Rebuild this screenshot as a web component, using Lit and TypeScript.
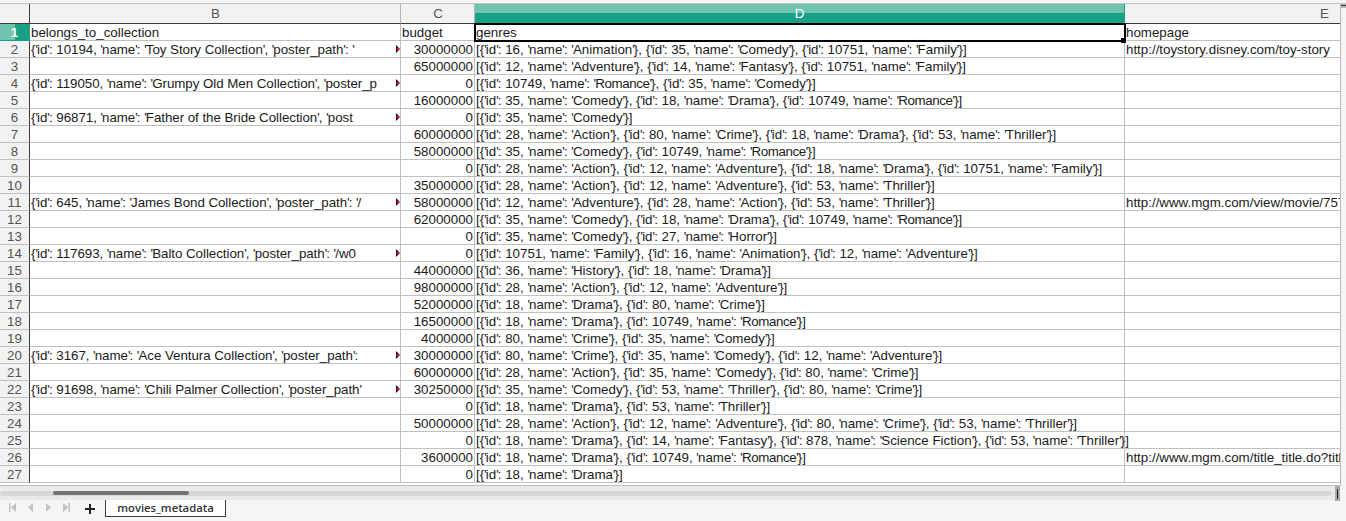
import { LitElement, html, css } from 'lit';
import { customElement } from 'lit/decorators.js';

type Row = { b?: string; c?: string; d: string; e?: string };

const g = (...items: [number, string][]) =>
  '[' + items.map(([id, name]) => `{'id': ${id}, 'name': '${name}'}`).join(', ') + ']';

// the reference sets apostrophes about 1px tighter than the browser does,
// and "Romance" comes out a little narrower too
const tight = (text?: string) => {
  if (!text) return '';
  return text.split("'").map((part, i) => {
    const body = part === 'Romance' ? html`<span class="rom">${part}</span>` : part;
    return i === 0 ? body : html`<span class="q">'</span>${body}`;
  });
};

const rows: Row[] = [
  { b: "{'id': 10194, 'name': 'Toy Story Collection', 'poster_path': '", c: '30000000', d: g([16, 'Animation'], [35, 'Comedy'], [10751, 'Family']), e: 'http://toystory.disney.com/toy-story' },
  { c: '65000000', d: g([12, 'Adventure'], [14, 'Fantasy'], [10751, 'Family']) },
  { b: "{'id': 119050, 'name': 'Grumpy Old Men Collection', 'poster_p", c: '0', d: g([10749, 'Romance'], [35, 'Comedy']) },
  { c: '16000000', d: g([35, 'Comedy'], [18, 'Drama'], [10749, 'Romance']) },
  { b: "{'id': 96871, 'name': 'Father of the Bride Collection', 'post", c: '0', d: g([35, 'Comedy']) },
  { c: '60000000', d: g([28, 'Action'], [80, 'Crime'], [18, 'Drama'], [53, 'Thriller']) },
  { c: '58000000', d: g([35, 'Comedy'], [10749, 'Romance']) },
  { c: '0', d: g([28, 'Action'], [12, 'Adventure'], [18, 'Drama'], [10751, 'Family']) },
  { c: '35000000', d: g([28, 'Action'], [12, 'Adventure'], [53, 'Thriller']) },
  { b: "{'id': 645, 'name': 'James Bond Collection', 'poster_path': '/", c: '58000000', d: g([12, 'Adventure'], [28, 'Action'], [53, 'Thriller']), e: 'http://www.mgm.com/view/movie/757' },
  { c: '62000000', d: g([35, 'Comedy'], [18, 'Drama'], [10749, 'Romance']) },
  { c: '0', d: g([35, 'Comedy'], [27, 'Horror']) },
  { b: "{'id': 117693, 'name': 'Balto Collection', 'poster_path': '/w0", c: '0', d: g([10751, 'Family'], [16, 'Animation'], [12, 'Adventure']) },
  { c: '44000000', d: g([36, 'History'], [18, 'Drama']) },
  { c: '98000000', d: g([28, 'Action'], [12, 'Adventure']) },
  { c: '52000000', d: g([18, 'Drama'], [80, 'Crime']) },
  { c: '16500000', d: g([18, 'Drama'], [10749, 'Romance']) },
  { c: '4000000', d: g([80, 'Crime'], [35, 'Comedy']) },
  { b: "{'id': 3167, 'name': 'Ace Ventura Collection', 'poster_path':", c: '30000000', d: g([80, 'Crime'], [35, 'Comedy'], [12, 'Adventure']) },
  { c: '60000000', d: g([28, 'Action'], [35, 'Comedy'], [80, 'Crime']) },
  { b: "{'id': 91698, 'name': 'Chili Palmer Collection', 'poster_path'", c: '30250000', d: g([35, 'Comedy'], [53, 'Thriller'], [80, 'Crime']) },
  { c: '0', d: g([18, 'Drama'], [53, 'Thriller']) },
  { c: '50000000', d: g([28, 'Action'], [12, 'Adventure'], [80, 'Crime'], [53, 'Thriller']) },
  { c: '0', d: g([18, 'Drama'], [14, 'Fantasy'], [878, 'Science Fiction'], [53, 'Thriller']) },
  { c: '3600000', d: g([18, 'Drama'], [10749, 'Romance']), e: 'http://www.mgm.com/title_title.do?title' },
  { c: '0', d: g([18, 'Drama']) },
];

@customElement('app-root')
export class AppRoot extends LitElement {
  static styles = css`
    :host {
      display: flex;
      flex-direction: column;
      width: 1346px;
      height: 521px;
      overflow: hidden;
      background: #f5f5f7;
      font-family: 'Liberation Sans', Arial, sans-serif;
      font-kerning: normal;
      color: #1a1a1a;
    }

    .top {
      height: 3px;
      background: #f5f5f7;
      border-bottom: 1px solid #c4c4c4;
      flex: none;
    }

    .main {
      display: flex;
      flex: none;
      height: 482px;
    }

    .sheet {
      width: 1340px;
      flex: none;
      overflow: hidden;
      background: #fff;
    }

    .side {
      flex: 1;
      position: relative;
      background: #f5f5f7;
      border-left: 1px solid #b8b8b8;
    }

    .side::before {
      content: '';
      position: absolute;
      left: 0;
      top: 0;
      width: 5px;
      height: 4px;
      background: linear-gradient(#b9b9b9 0 1px, #333 1px 2px, #b9b9b9 2px);
    }

    .grid {
      display: grid;
      grid-template-columns: 30px 371px 74px 650px 215px;
      grid-template-rows: 20px;
      grid-auto-rows: 17px;
      font-size: 13.33px;
      line-height: 17px;
    }

    .q {
      letter-spacing: -0.95px;
    }

    .rom {
      letter-spacing: -0.4px;
    }

    .head {
      box-sizing: border-box;
      background: #f2f2f2;
      border-bottom: 1px solid #3c3c3c;
      border-right: 1px solid #b4b4b4;
      color: #555;
      padding-left: 1px;
      line-height: 19px;
      text-align: center;
    }

    .head.corner {
      border-right-color: #3c3c3c;
    }

    .head.active {
      color: #fff;
      padding-left: 0;
      border-right-color: #18a085;
      background: linear-gradient(#6fc4b0 0 9px, #18a085 9px);
    }

    .head.e {
      text-align: right;
      padding-right: 11px;
      border-right: none;
    }

    .num {
      box-sizing: border-box;
      background: #f2f2f2;
      border-bottom: 1px solid #c0c0c0;
      border-right: 1px solid #3c3c3c;
      color: #555;
      text-align: center;
    }

    .num.active {
      color: #fff;
      font-weight: bold;
      border-right-color: #18a085;
      border-bottom-color: #18a085;
      background: linear-gradient(90deg, #6fc4b0 0 15px, #18a085 15px);
    }

    .cell {
      box-sizing: border-box;
      position: relative;
      padding-left: 1px;
      white-space: nowrap;
      border-bottom: 1px solid #c0c0c0;
      border-right: 1px solid #c0c0c0;
    }

    .cell.b {
      letter-spacing: -0.04px;
    }

    .cell.right {
      text-align: right;
      padding: 0 1px 0 0;
    }

    .cell.d {
      z-index: 1;
    }

    .cell.e {
      overflow: hidden;
      border-right: none;
    }

    .cell.cursor {
      outline: 2px solid #000;
      outline-offset: -1px;
      z-index: 2;
    }

    .cell.cursor::after {
      content: '';
      position: absolute;
      right: -2px;
      bottom: -3px;
      width: 5px;
      height: 5px;
      background: #000;
    }

    .more {
      position: absolute;
      right: 0;
      top: 4px;
      width: 4px;
      height: 8px;
      background: radial-gradient(circle at 2px 4px, #e0102c 1.2px, #111 1.7px);
      clip-path: polygon(0 0, 100% 50%, 0 100%);
    }

    .tail {
      height: 2px;
      border-bottom: 1px solid #c0c0c0;
    }

    .hbar {
      flex: none;
      width: 1340px;
      height: 14px;
      display: flex;
      align-items: center;
      background: #e9ebea;
    }

    .track {
      width: 1332px;
      height: 5px;
      border-radius: 3px;
      background: #d6d8d7;
    }

    .thumb {
      width: 136px;
      height: 4px;
      margin-left: 53px;
      border-radius: 2px;
      background: #727272;
    }

    .grip {
      margin-left: 3px;
      width: 5px;
      height: 15px;
      background: #a9a9a9;
      display: flex;
      justify-content: center;
    }

    .grip i {
      width: 1px;
      height: 10px;
      margin-top: 3px;
      background: #222;
    }

    .tabs {
      flex: 1;
      display: flex;
      align-items: flex-start;
    }

    .nav {
      display: flex;
      align-items: center;
      gap: 11px;
      height: 15px;
      margin-left: 9px;
    }

    .nav svg {
      display: block;
      width: 7px;
      height: 9px;
      fill: #c2c2c2;
    }

    .add {
      margin: 0 10px 0 15px;
      height: 17px;
      display: flex;
      align-items: center;
    }

    .add svg {
      width: 10px;
      height: 10px;
      fill: #222;
    }

    .tab {
      width: 121px;
      height: 17px;
      box-sizing: border-box;
      background: #fff;
      border: 1px solid #3c3c3c;
      border-top: none;
      color: #333;
      font-size: 11.3px;
      font-weight: 600;
      font-family: 'Open Sans', 'Liberation Sans', sans-serif;
      line-height: 15px;
      text-align: center;
    }
  `;

  render() {
    return html`
      <div class="top"></div>
      <div class="main">
        <div class="sheet">
          <div class="grid">
            <div class="head corner"></div>
            <div class="head">B</div>
            <div class="head">C</div>
            <div class="head active">D</div>
            <div class="head e">E</div>

            <div class="num active">1</div>
            <div class="cell">belongs_to_collection</div>
            <div class="cell">budget</div>
            <div class="cell d cursor">genres</div>
            <div class="cell e">homepage</div>

            ${rows.map(
              (r, i) => html`
                <div class="num">${i + 2}</div>
                <div class="cell b">
                  ${tight(r.b)}${r.b ? html`<span class="more"></span>` : ''}
                </div>
                <div class="cell right">${r.c}</div>
                <div class="cell d">${tight(r.d)}</div>
                <div class="cell e">${r.e}</div>
              `
            )}
          </div>
          <div class="tail"></div>
        </div>
        <div class="side"></div>
      </div>
      <div class="hbar">
        <div class="track"><div class="thumb"></div></div>
        <div class="grip"><i></i></div>
      </div>
      <div class="tabs">
        <div class="nav">
          <svg viewBox="0 0 7 9"><path d="M0 0h1.500v9H0zM7 0v9L2 4.500z" /></svg>
          <svg viewBox="0 0 7 9"><path d="M6 0v9L1 4.500z" /></svg>
          <svg viewBox="0 0 7 9"><path d="M1 0v9l5-4.500z" /></svg>
          <svg viewBox="0 0 7 9"><path d="M5.500 0H7v9H5.500zM0 0v9l5-4.500z" /></svg>
        </div>
        <div class="add">
          <svg viewBox="0 0 10 10"><path d="M4 0h2v4h4v2H6v4H4V6H0V4h4z" /></svg>
        </div>
        <div class="tab">movies_metadata</div>
      </div>
    `;
  }
}

declare global {
  interface HTMLElementTagNameMap {
    'app-root': AppRoot;
  }
}
